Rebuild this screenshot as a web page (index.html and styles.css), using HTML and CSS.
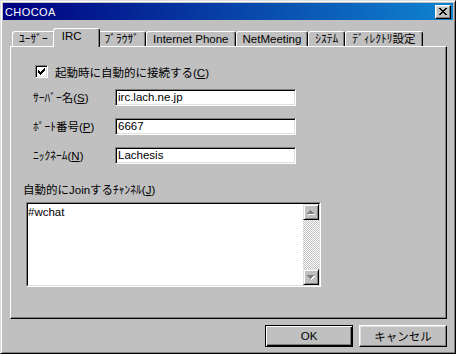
FILE: index.html
```html
<!DOCTYPE html>
<html lang="ja">
<head>
    <meta charset="UTF-8">
    <title>CHOCOA</title>
    <link rel="stylesheet" href="styles.css">
</head>
<body>
    <div class="window">
        <div class="titlebar">
            <span class="title">CHOCOA</span>
            <span class="close">
                <svg width="8" height="7" viewBox="0 0 8 7" shape-rendering="crispEdges"><path fill="#000" d="M0 0h2v1h-2z M6 0h2v1h-2z M1 1h2v1h-2z M5 1h2v1h-2z M2 2h4v1h-4z M3 3h2v1h-2z M2 4h4v1h-4z M1 5h2v1h-2z M5 5h2v1h-2z M0 6h2v1h-2z M6 6h2v1h-2z"/></svg>
            </span>
        </div>

        <div class="content">
            <div class="tabs">
                <div class="tab">ﾕｰｻﾞｰ</div>
                <div class="tab active">IRC</div>
                <div class="tab">ﾌﾞﾗｳｻﾞ</div>
                <div class="tab">Internet Phone</div>
                <div class="tab">NetMeeting</div>
                <div class="tab">ｼｽﾃﾑ</div>
                <div class="tab">ﾃﾞｨﾚｸﾄﾘ設定</div>
            </div>

            <div class="panel">
                <div class="check-row">
                    <span class="checkbox">
                        <svg width="7" height="7" viewBox="0 0 7 7" shape-rendering="crispEdges"><path fill="#000" d="M6 0h1v1h-1z M5 1h2v1h-2z M0 2h1v1h-1z M4 2h3v1h-3z M0 3h2v1h-2z M3 3h3v1h-3z M0 4h5v1h-5z M1 5h3v1h-3z M2 6h1v1h-1z"/></svg>
                    </span>
                    <span>起動時に自動的に接続する(<u>C</u>)</span>
                </div>

                <div class="fields">
                    <span class="label">ｻｰﾊﾞｰ名(<u>S</u>)</span>
                    <div class="input">irc.lach.ne.jp</div>
                    <span class="label">ﾎﾟｰﾄ番号(<u>P</u>)</span>
                    <div class="input">6667</div>
                    <span class="label">ﾆｯｸﾈｰﾑ(<u>N</u>)</span>
                    <div class="input">Lachesis</div>
                </div>

                <div class="channel-label">自動的にJoinするﾁｬﾝﾈﾙ(<u>J</u>)</div>
                <div class="textarea">
                    <div class="textarea-inner">
                        <div class="textarea-text">#wchat</div>
                        <div class="scrollbar">
                            <span class="scroll-btn">
                                <svg width="8" height="5" viewBox="0 0 8 5" shape-rendering="crispEdges">
                                    <path fill="#fff" d="M4 1h1v1h-1z M3 2h3v1h-3z M2 3h5v1h-5z M1 4h7v1h-7z"/>
                                    <path fill="#808080" d="M3 0h1v1h-1z M2 1h3v1h-3z M1 2h5v1h-5z M0 3h7v1h-7z"/>
                                </svg>
                            </span>
                            <span class="scroll-btn">
                                <svg width="8" height="5" viewBox="0 0 8 5" shape-rendering="crispEdges">
                                    <path fill="#fff" d="M1 1h7v1h-7z M2 2h5v1h-5z M3 3h3v1h-3z M4 4h1v1h-1z"/>
                                    <path fill="#808080" d="M0 0h7v1h-7z M1 1h5v1h-5z M2 2h3v1h-3z M3 3h1v1h-1z"/>
                                </svg>
                            </span>
                        </div>
                    </div>
                </div>
            </div>

            <div class="buttons">
                <button class="btn default">OK</button>
                <button class="btn">キャンセル</button>
            </div>
        </div>
    </div>
</body>
</html>
```

FILE: styles.css
```css
* {
    box-sizing: border-box;
}
body {
    margin: 0;
    background: #fff;
    font-family: "Liberation Sans", "Noto Sans CJK JP", sans-serif;
    font-size: 11.5px;
    color: #000;
}
.window {
    width: 456px;
    height: 354px;
    background: #c0c0c0;
    border: 1px solid;
    border-color: #dfdfdf #000 #000 #dfdfdf;
    box-shadow: inset 1px 1px #fff, inset -1px -1px #808080;
    padding: 2px;
}
.titlebar {
    height: 17px;
    display: flex;
    align-items: center;
    justify-content: space-between;
    padding: 0 2px 0 2px;
    background: linear-gradient(to right, #000080, #1084d0);
    color: #fff;
}
.title {
    font-size: 11px;
    letter-spacing: 0.4px;
}
.close {
    width: 16px;
    height: 14px;
    display: flex;
    align-items: center;
    justify-content: center;
    background: #c0c0c0;
    border: 1px solid;
    border-color: #fff #000 #000 #fff;
    box-shadow: inset -1px -1px #808080, inset 1px 1px #dfdfdf;
}
.content {
    padding: 8px 6px 0 7px;
}
.tabs {
    display: flex;
    align-items: flex-end;
    height: 18px;
    padding-left: 2px;
}
.tab {
    height: 15px;
    padding: 0 6px;
    border: 1px solid;
    border-bottom: none;
    border-color: #fff #000 transparent #fff;
    border-radius: 3px 3px 0 0;
    box-shadow: inset -1px 0 #808080;
    line-height: 14px;
    white-space: nowrap;
}
.tab.active {
    height: 19px;
    margin: 0 -2px -1px;
    padding: 0 17px 0 8px;
    position: relative;
    z-index: 1;
    background: #c0c0c0;
}
.panel {
    height: 273px;
    border: 1px solid;
    border-color: #fff #000 #000 #fff;
    box-shadow: inset -1px -1px #808080;
    padding-top: 18px;
}
.check-row {
    display: flex;
    align-items: center;
    gap: 7px;
    height: 13px;
    margin-left: 24px;
}
.checkbox {
    width: 13px;
    height: 13px;
    display: flex;
    align-items: center;
    justify-content: center;
    background: #fff;
    border: 1px solid;
    border-color: #808080 #fff #fff #808080;
    box-shadow: inset 1px 1px #000, inset -1px -1px #dfdfdf;
}
.fields {
    display: grid;
    grid-template-columns: 82px 181px;
    grid-auto-rows: 17px;
    row-gap: 12px;
    align-items: center;
    margin: 11px 0 0 22px;
}
.label {
    line-height: 14px;
}
.input {
    height: 17px;
    padding: 0 2px;
    background: #fff;
    border: 1px solid;
    border-color: #808080 #fff #fff #808080;
    box-shadow: inset 1px 1px #000, inset -1px -1px #dfdfdf;
    line-height: 15px;
}
.channel-label {
    margin: 19px 0 0 12px;
    line-height: 14px;
}
.textarea {
    width: 295px;
    height: 85px;
    margin: 5px 0 0 15px;
    border: 1px solid;
    border-color: #808080 #fff #fff #808080;
}
.textarea-inner {
    height: 100%;
    display: flex;
    background: #fff;
    border: 1px solid;
    border-color: #000 #dfdfdf #dfdfdf #000;
}
.textarea-text {
    flex: 1;
    padding: 1px 0 0 0;
    line-height: 14px;
}
.scrollbar {
    width: 16px;
    display: flex;
    flex-direction: column;
    justify-content: space-between;
    background-color: #fff;
    background-image: conic-gradient(#c0c0c0 25%, #fff 0 50%, #c0c0c0 0 75%, #fff 0);
    background-size: 2px 2px;
}
.scroll-btn {
    width: 16px;
    height: 16px;
    display: flex;
    align-items: center;
    justify-content: center;
    background: #c0c0c0;
    border: 1px solid;
    border-color: #dfdfdf #000 #000 #dfdfdf;
    box-shadow: inset 1px 1px #fff, inset -1px -1px #808080;
}
.buttons {
    display: flex;
    justify-content: flex-end;
    gap: 6px;
    margin-top: 6px;
}
.btn {
    width: 88px;
    height: 22px;
    padding: 0;
    font: inherit;
    color: #000;
    background: #c0c0c0;
    border: 1px solid;
    border-color: #fff #000 #000 #fff;
    box-shadow: inset -1px -1px #808080, inset 1px 1px #dfdfdf;
}
.btn.default {
    border-color: #000;
    box-shadow: inset 1px 1px #fff, inset -1px -1px #000, inset -2px -2px #808080;
}
```
